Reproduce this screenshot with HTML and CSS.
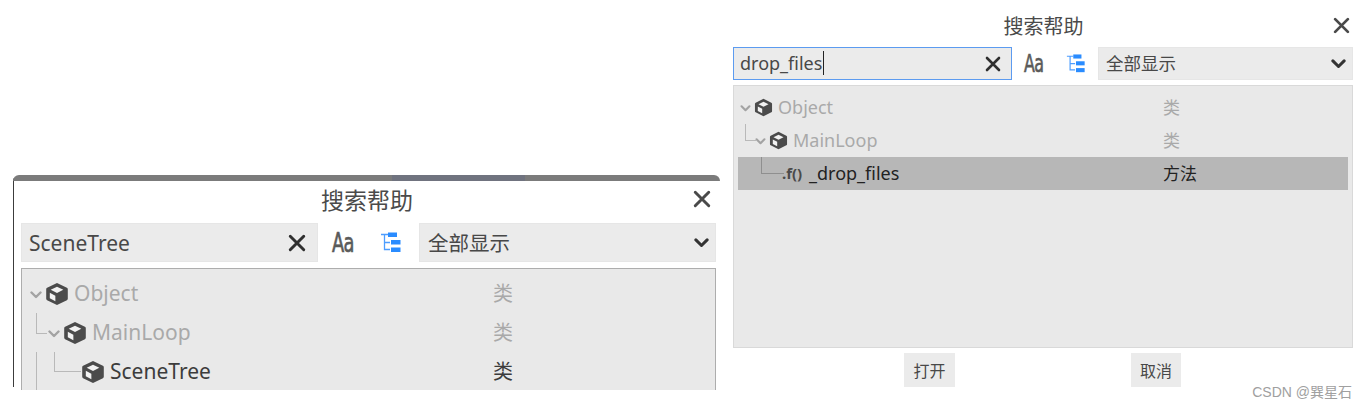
FILE: index.html
```html
<!DOCTYPE html>
<html lang="zh-CN">
<head>
  <meta charset="UTF-8" />
  <meta name="viewport" content="width=device-width, initial-scale=1.0" />
  <title>搜索帮助</title>
  <link rel="stylesheet" href="styles.css">
</head>
<body>
  <svg class="defs" width="0" height="0">
    <symbol id="cube" viewBox="0 0 16 16">
      <path d="M8 .6 14.600 3.900a1 1 0 0 1 .6.9v6.400a1 1 0 0 1-.6.9L8 15.400 1.400 12.100a1 1 0 0 1-.6-.9V4.800a1 1 0 0 1 .6-.9z" fill="#4b4b4b"/>
      <path d="M8 3.100 12.200 5.200 8 7.300 3.800 5.200z" fill="#f2f2f2"/>
      <path d="M3.200 7.200 6.900 9.100V12.800L3.200 10.900z" fill="#f2f2f2"/>
    </symbol>
    <symbol id="chevron" viewBox="0 0 12 8">
      <path d="M1.500 1.500 6 6l4.500-4.500" fill="none" stroke="currentColor" stroke-width="2.400" stroke-linecap="round" stroke-linejoin="round"/>
    </symbol>
    <symbol id="cross" viewBox="0 0 16 16">
      <path d="M2 2 14 14M14 2 2 14" fill="none" stroke="currentColor" stroke-width="2.600" stroke-linecap="round"/>
    </symbol>
    <symbol id="hierarchy" viewBox="0 0 22 22">
      <path d="M1 2.500H8M4.500 2.500V17.500H10M4.500 10.500H10" fill="none" stroke="#4d9dff" stroke-width="1.300"/>
      <rect x="8" y="0.500" width="9" height="4.500" fill="#2a8cff"/>
      <rect x="11" y="8" width="9.500" height="4.500" fill="#2a8cff"/>
      <rect x="11" y="15.500" width="9.500" height="4.500" fill="#2a8cff"/>
    </symbol>
  </svg>

  <!-- left shot, cut off at the bottom -->
  <section class="window window-left">
    <div class="titlebar-strip"><span class="strip-blue"></span></div>
    <div class="window-head">
      <h2>搜索帮助</h2>
      <svg class="close"><use href="#cross"/></svg>
    </div>
    <div class="toolbar">
      <div class="search">
        <span class="search-text">SceneTree</span>
        <svg class="clear"><use href="#cross"/></svg>
      </div>
      <span class="case-icon">Aa</span>
      <svg class="tree-icon"><use href="#hierarchy"/></svg>
      <div class="select">
        <span>全部显示</span>
        <svg class="select-arrow"><use href="#chevron"/></svg>
      </div>
    </div>
    <div class="tree">
      <div class="row dim">
        <div class="name">
          <svg class="fold"><use href="#chevron"/></svg>
          <svg class="cube"><use href="#cube"/></svg>
          <span>Object</span>
        </div>
        <span class="type">类</span>
      </div>
      <div class="row dim level-1">
        <i class="branch branch-a"></i>
        <div class="name">
          <svg class="fold"><use href="#chevron"/></svg>
          <svg class="cube"><use href="#cube"/></svg>
          <span>MainLoop</span>
        </div>
        <span class="type">类</span>
      </div>
      <div class="row level-2">
        <i class="branch branch-b"></i>
        <i class="branch branch-trunk"></i>
        <div class="name">
          <svg class="cube"><use href="#cube"/></svg>
          <span>SceneTree</span>
        </div>
        <span class="type">类</span>
      </div>
    </div>
  </section>

  <!-- right shot -->
  <section class="window window-right">
    <div class="window-head">
      <h2>搜索帮助</h2>
      <svg class="close"><use href="#cross"/></svg>
    </div>
    <div class="toolbar">
      <div class="search focused">
        <span class="search-text">drop_files</span>
        <svg class="clear"><use href="#cross"/></svg>
      </div>
      <span class="case-icon">Aa</span>
      <svg class="tree-icon"><use href="#hierarchy"/></svg>
      <div class="select">
        <span>全部显示</span>
        <svg class="select-arrow"><use href="#chevron"/></svg>
      </div>
    </div>
    <div class="tree">
      <div class="row dim">
        <div class="name">
          <svg class="fold"><use href="#chevron"/></svg>
          <svg class="cube"><use href="#cube"/></svg>
          <span>Object</span>
        </div>
        <span class="type">类</span>
      </div>
      <div class="row dim level-1">
        <i class="branch branch-a"></i>
        <div class="name">
          <svg class="fold"><use href="#chevron"/></svg>
          <svg class="cube"><use href="#cube"/></svg>
          <span>MainLoop</span>
        </div>
        <span class="type">类</span>
      </div>
      <div class="row level-2 selected">
        <i class="branch branch-b"></i>
        <div class="name">
          <span class="func-icon">.f()</span>
          <span>_drop_files</span>
        </div>
        <span class="type">方法</span>
      </div>
    </div>
    <div class="actions">
      <button>打开</button>
      <button>取消</button>
    </div>
  </section>

  <div class="watermark">CSDN @巽星石</div>
</body>
</html>
```

FILE: styles.css
```css
:root {
  --text: #484848;
  --dim: #a9a9a9;
  --field: #ebebeb;
  --tree: #e9e9e9;
  --line: #b9b9b9;
}
body {
  margin: 0;
  background: #fff;
  color: var(--text);
  font-family: "Noto Sans", "Noto Sans CJK SC", sans-serif;
  height: 409px;
  position: relative;
  overflow: hidden;
}
.defs { position: absolute; }
svg { flex-shrink: 0; }

/* the two screenshots sit free on the white page */
.window { position: absolute; overflow: hidden; background: #fff; }
.window-left {
  left: 13px;
  top: 175px;
  width: 707px;
  height: 215px;
  font-size: 21px;
  --row: 39px;
  --type-col: 472px;
  --pad: 8px;
  border-top-left-radius: 6px;
  border-top-right-radius: 6px;
}
.window-left::before {
  content: "";
  position: absolute;
  left: 0;
  top: 0;
  width: 1px;
  height: 212px;
  background: #3c3c3c;
}
.window-right {
  left: 725px;
  top: 0;
  width: 642px;
  height: 392px;
  font-size: 18px;
  --row: 33px;
  --type-col: 430px;
  --pad: 8px;
}

.titlebar-strip {
  height: 6px;
  background: #7b7b7b;
  position: relative;
}
.strip-blue {
  position: absolute;
  left: 379px;
  top: 0;
  width: 133px;
  height: 6px;
  background: #70737f;
}

.window-head {
  position: relative;
  display: flex;
  justify-content: center;
  align-items: center;
}
.window-left .window-head { height: 42px; }
.window-right .window-head { height: 47px; }
.window-head h2 {
  margin: 0;
  font-weight: 400;
  line-height: 1;
  color: #4a4a4a;
}
.window-left .window-head h2 { font-size: 23px; margin: -3px 0 0 1px; }
.window-right .window-head h2 { font-size: 20px; margin: 7px 0 0 -5px; }
.close {
  position: absolute;
  color: #4a4a4a;
}
.window-left .close { left: 680px; top: 9px; width: 18px; height: 18px; }
.window-right .close { left: 608px; top: 17px; width: 17px; height: 17px; }

.toolbar {
  display: flex;
  align-items: center;
  padding-left: var(--pad);
}
.window-left .toolbar { height: 39px; margin-bottom: 6px; }
.window-right .toolbar { height: 33px; margin-bottom: 5px; }

.search {
  height: 100%;
  box-sizing: border-box;
  background: var(--field);
  border: 1px solid #e6e6e6;
  display: flex;
  align-items: center;
  justify-content: space-between;
  padding: 0 11px 0 7px;
}
.window-left .search { width: 297px; }
.window-right .search { width: 279px; padding: 0 10px 0 6px; }
.search.focused { border-color: #5c9bf0; }
.focused .search-text {
  border-right: 1px solid #222;
  line-height: 24px;
  padding-right: 1px;
  margin-top: -1px;
}
.clear { width: 18px; height: 18px; color: #2f2f2f; }
.window-right .clear { width: 16px; height: 16px; }

.case-icon {
  font-family: "DejaVu Sans", sans-serif;
  color: #5a5a5a;
  -webkit-text-stroke: 0.7px #5a5a5a;
  display: inline-block;
  transform: scaleX(0.66);
  transform-origin: left center;
  letter-spacing: -1px;
  line-height: 1;
}
.window-left .case-icon { font-size: 27px; margin-left: 14px; width: 48px; }
.window-right .case-icon { font-size: 24px; margin-left: 12px; width: 42px; }

.tree-icon { width: 22px; height: 22px; }
.window-right .tree-icon { width: 20px; height: 20px; }

.select {
  height: 100%;
  box-sizing: border-box;
  background: var(--field);
  border: 1px solid #e6e6e6;
  display: flex;
  align-items: center;
  justify-content: space-between;
  padding: 0 6px 0 8px;
}
.select > span { margin-top: -2px; }
.window-left .select { width: 297px; margin-left: 17px; font-size: 20.500px; }
.window-right .select { width: 255px; margin-left: 12px; font-size: 17.500px; padding-left: 7px; }
.select-arrow { width: 15px; height: 10px; color: #333; }

.tree {
  box-sizing: border-box;
  background: var(--tree);
  margin-left: var(--pad);
  border: 1px solid #d9d9d9;
  padding: 5px 4px 4px;
}
.window-left .tree { width: 695px; border-color: #adadad; height: 130px; }
.window-right .tree { width: 620px; height: 263px; }

.row {
  height: var(--row);
  display: grid;
  grid-template-columns: var(--type-col) 1fr;
  align-items: center;
  position: relative;
  line-height: 1;
}
.type { margin-left: -5px; }
.window-left .type { font-size: 20px; }
.window-right .type { font-size: 17px; margin-top: -1px; }
.row.dim { color: var(--dim); }
.row.selected { background: #b7b7b7; color: #222; }
.window-left .row.level-2 { color: #3c3c3c; }

.name { display: flex; align-items: center; }
.window-left .level-1 .name { padding-left: 18px; }
.window-left .level-2 .name { padding-left: 55px; }
.window-right .name { margin-top: -1px; }
.window-right .level-1 .name { padding-left: 15px; }
.window-right .level-2 .name { padding-left: 44px; }

.fold { width: 12px; height: 8px; color: #a3a3a3; margin: 2px 3px 0 4px; }
.window-right .fold { width: 11px; height: 7px; margin: 2px 3px 0 2px; }
.cube { width: 24px; height: 24px; margin-right: 5px; }
.window-right .cube { width: 19px; height: 19px; margin-right: 5px; }

.func-icon {
  font-size: 15px;
  font-weight: 700;
  color: #4a4a4a;
  width: 27px;
}

/* tree connectors are drawn over the rows */
.branch {
  position: absolute;
  border-left: 1px solid var(--line);
  border-bottom: 1px solid var(--line);
}
.window-left .branch-a { left: 10px; top: 0; width: 10px; height: 20px; }
.window-left .branch-b { left: 28px; top: 0; width: 26px; height: 19px; }
.window-left .branch-trunk { left: 10px; top: 0; height: 40px; width: 0; border-bottom: 0; }
.window-right .branch-a { left: 7px; top: 0; width: 10px; height: 16px; }
.window-right .branch-b { left: 23px; top: 0; width: 22px; height: 16px; border-color: #8f8f8f; }

.actions { display: flex; padding-top: 5px; }
.actions button {
  height: 34px;
  border: 0;
  background: var(--field);
  color: var(--text);
  font: inherit;
  font-size: 16px;
  padding: 0;
  width: 51px;
  margin-left: 179px;
}
.actions button + button { width: 50px; margin-left: 176px; }

.watermark {
  position: absolute;
  right: 15px;
  top: 383px;
  font-size: 14px;
  line-height: 18px;
  color: #a0a0a0;
  font-family: "Liberation Sans", "Noto Sans CJK SC", sans-serif;
  background: #fff;
}
```
